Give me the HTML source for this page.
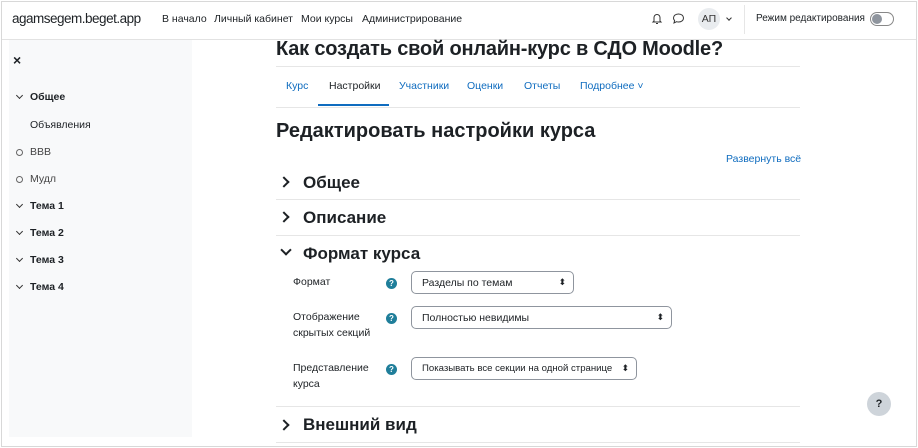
<!DOCTYPE html>
<html><head><meta charset="utf-8"><style>
*{margin:0;padding:0;box-sizing:border-box}
body{width:918px;height:448px;overflow:hidden;background:#fff;font-family:"Liberation Sans","DejaVu Sans",sans-serif;color:#1d2125;position:relative}
.frame{position:absolute;left:1px;top:1px;width:916px;height:446px;border:1px solid #d8d8d8}
.a{position:absolute;white-space:nowrap}
.nav{font-size:10.5px;color:#1d2125}
.side{position:absolute;left:9px;top:40px;width:183px;height:397px;background:#f8f9fa}
.si{font-size:10.5px;color:#1d2125}
.b{font-weight:bold}
.chev{display:inline-block;width:5px;height:5px;border-right:1.6px solid #333;border-bottom:1.6px solid #333;transform:rotate(45deg)}
.chr{display:inline-block;width:8px;height:8px;border-right:2.6px solid #1d2125;border-bottom:2.6px solid #1d2125}
.circ{display:inline-block;width:7px;height:7px;border:1px solid #666;border-radius:50%}
.h{font-size:17px;font-weight:bold}
.line{position:absolute;height:1px;background:#e6e6e6}
.tab{font-size:10.5px;color:#0f6cbf}
.lab{font-size:10.5px;color:#1d2125;line-height:16px}
.q{position:absolute;width:11px;height:11px;border-radius:50%;background:#1f7e9a;color:#fff;font-size:8px;font-weight:bold;text-align:center;line-height:11px}
.sel{position:absolute;height:23px;border:1px solid #8f959e;border-radius:5px;font-size:10.5px;color:#1d2125;padding:5px 10px;white-space:nowrap}
.sel:after{content:"⬍";position:absolute;right:7px;top:5px;font-size:9px}
</style></head><body>
<div class="frame"></div>
<div class="a" style="left:12px;top:11px;font-size:13.5px;letter-spacing:-0.5px;color:#1d2125">agamsegem.beget.app</div>
<div class="a nav" style="left:162px;top:13px">В начало</div>
<div class="a nav" style="left:214px;top:13px">Личный кабинет</div>
<div class="a nav" style="left:301px;top:13px">Мои курсы</div>
<div class="a nav" style="left:362px;top:13px">Администрирование</div>
<svg class="a" style="left:651px;top:12px" width="12" height="13" viewBox="0 0 12 13"><path d="M3 9V5.5a3 3 0 0 1 6 0V9l1 1H2z M5 11.5h2" fill="none" stroke="#333" stroke-width="1"/></svg>
<svg class="a" style="left:672px;top:13px" width="13" height="11" viewBox="0 0 13 11"><path d="M6.5 1C3.5 1 1.5 2.8 1.5 5c0 1 .4 1.9 1.1 2.6L2 10l2.6-1.3c.6.2 1.2.3 1.9.3 3 0 5-1.8 5-4S9.5 1 6.5 1z" fill="none" stroke="#333" stroke-width="1"/></svg>
<div class="a" style="left:698px;top:8px;width:22px;height:22px;border-radius:50%;background:#e9ecef;font-size:10.5px;color:#333;text-align:center;line-height:22px">АП</div>
<div class="a chev" style="left:727px;top:16px;width:4px;height:4px"></div>
<div class="a" style="left:744px;top:5px;width:1px;height:29px;background:#e6e6e6"></div>
<div class="a nav" style="left:756px;top:13px;font-size:10px">Режим редактирования</div>
<div class="a" style="left:870px;top:12px;width:24px;height:14px;border:1px solid #888;border-radius:7px"></div>
<div class="a" style="left:872px;top:14px;width:10px;height:10px;border-radius:50%;background:#8f959e"></div>
<div class="line" style="left:2px;top:39px;width:914px;background:#e2e2e2"></div>

<div class="side"></div>
<div class="a" style="left:13px;top:52px;font-size:14px;font-weight:bold">×</div>
<div class="a chev" style="left:17px;top:93px"></div><div class="a si b" style="left:30px;top:91px">Общее</div>
<div class="a si" style="left:30px;top:119px">Объявления</div>
<div class="a circ" style="left:16px;top:149px"></div><div class="a si" style="left:30px;top:146px;color:#444">ВВВ</div>
<div class="a circ" style="left:16px;top:176px"></div><div class="a si" style="left:30px;top:173px;color:#444">Мудл</div>
<div class="a chev" style="left:17px;top:202px"></div><div class="a si b" style="left:30px;top:200px">Тема 1</div>
<div class="a chev" style="left:17px;top:229px"></div><div class="a si b" style="left:30px;top:227px">Тема 2</div>
<div class="a chev" style="left:17px;top:256px"></div><div class="a si b" style="left:30px;top:254px">Тема 3</div>
<div class="a chev" style="left:17px;top:283px"></div><div class="a si b" style="left:30px;top:281px">Тема 4</div>

<div class="a" style="left:276px;top:38px;font-size:20px;font-weight:bold;letter-spacing:-0.2px">Как создать свой онлайн-курс в СДО Moodle?</div>
<div class="line" style="left:276px;top:66px;width:524px"></div>
<div class="a tab" style="left:286px;top:80px">Курс</div>
<div class="a tab" style="left:329px;top:80px;color:#1d2125">Настройки</div>
<div class="a" style="left:318px;top:104px;width:71px;height:2px;background:#0f6cbf"></div>
<div class="a tab" style="left:399px;top:80px">Участники</div>
<div class="a tab" style="left:467px;top:80px">Оценки</div>
<div class="a tab" style="left:524px;top:80px">Отчеты</div>
<div class="a tab" style="left:580px;top:80px">Подробнее ˅</div>
<div class="line" style="left:276px;top:107px;width:524px"></div>
<div class="a" style="left:276px;top:120px;font-size:20px;font-weight:bold">Редактировать настройки курса</div>
<div class="a tab" style="left:726px;top:153px">Развернуть всё</div>

<div class="a chr" style="left:280px;top:178px;transform:rotate(-45deg)"></div>
<div class="a h" style="left:303px;top:173px">Общее</div>
<div class="line" style="left:276px;top:199px;width:524px"></div>
<div class="a chr" style="left:280px;top:213px;transform:rotate(-45deg)"></div>
<div class="a h" style="left:303px;top:208px">Описание</div>
<div class="line" style="left:276px;top:235px;width:524px"></div>
<div class="a chr" style="left:282px;top:246px;transform:rotate(45deg)"></div>
<div class="a h" style="left:303px;top:244px">Формат курса</div>

<div class="a lab" style="left:293px;top:274px">Формат</div>
<div class="q" style="left:386px;top:278px">?</div>
<div class="sel" style="left:411px;top:271px;width:163px">Разделы по темам</div>
<div class="a lab" style="left:293px;top:309px">Отображение<br>скрытых секций</div>
<div class="q" style="left:386px;top:313px">?</div>
<div class="sel" style="left:411px;top:306px;width:261px">Полностью невидимы</div>
<div class="a lab" style="left:293px;top:360px">Представление<br>курса</div>
<div class="q" style="left:386px;top:364px">?</div>
<div class="sel" style="left:411px;top:357px;width:226px;padding-left:10px;font-size:9.6px">Показывать все секции на одной странице</div>
<div class="line" style="left:276px;top:406px;width:524px"></div>
<div class="a chr" style="left:280px;top:421px;transform:rotate(-45deg)"></div>
<div class="a h" style="left:303px;top:415px">Внешний вид</div>
<div class="line" style="left:276px;top:442px;width:524px"></div>

<div class="a" style="left:867px;top:392px;width:24px;height:24px;border-radius:50%;background:#ced4da;font-size:11px;font-weight:bold;text-align:center;line-height:24px">?</div>
</body></html>
